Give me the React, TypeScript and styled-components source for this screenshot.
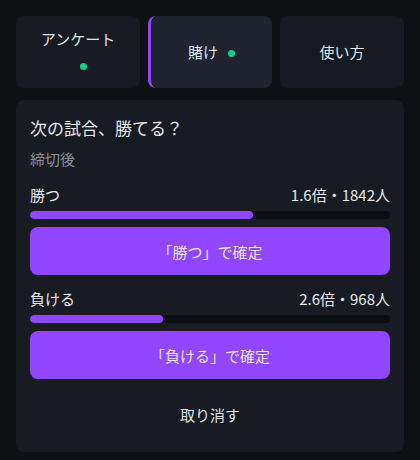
import styled, { createGlobalStyle } from "styled-components";

const GlobalStyle = createGlobalStyle`
    html, body {
        margin: 0;
        padding: 0;
        background: #0f1013;
    }
    body {
        font-family: "Noto Sans CJK JP", "Noto Sans", sans-serif;
        color: #e3e6eb;
    }
    * {
        box-sizing: border-box;
    }
`

type TabType = {
    label: string
    dot?: boolean
    active?: boolean
}

const tabs: TabType[] = [
    {label: "アンケート", dot: true},
    {label: "賭け", dot: true, active: true},
    {label: "使い方"},
]

type OptionType = {
    name: string
    odds: string
    count: string
    percent: number
}

const options: OptionType[] = [
    {name: "勝つ", odds: "1.6倍", count: "1842人", percent: 62},
    {name: "負ける", odds: "2.6倍", count: "968人", percent: 37},
]

export const App = () => {
    return (
        <Page>
            <GlobalStyle/>
            <Tabs>
                {tabs.map(tab => (
                    <Tab key={tab.label} $active={tab.active}>
                        <TabLabel>
                            {tab.label}
                            {tab.dot && <Dot/>}
                        </TabLabel>
                    </Tab>
                ))}
            </Tabs>

            <Card>
                <Title>次の試合、勝てる？</Title>
                <Status>締切後</Status>

                <Options>
                    {options.map(option => (
                        <Option key={option.name}>
                            <OptionHead>
                                <span>{option.name}</span>
                                <span>{option.odds}・{option.count}</span>
                            </OptionHead>
                            <Track>
                                <Fill style={{width: `${option.percent}%`}}/>
                            </Track>
                            <ConfirmButton>「{option.name}」で確定</ConfirmButton>
                        </Option>
                    ))}
                </Options>

                <CancelButton>取り消す</CancelButton>
            </Card>
        </Page>
    );
};

export default App;

const Page = styled.div`
    padding: 16px;
    display: flex;
    flex-direction: column;
    gap: 12px;
`

const Tabs = styled.div`
    display: grid;
    grid-template-columns: repeat(3, 1fr);
    gap: 8px;
`

const Tab = styled.button<{ $active?: boolean }>`
    height: 72px;
    padding: 0 20px;
    display: flex;
    align-items: center;
    justify-content: center;
    text-align: center;
    border: none;
    border-left: ${props => props.$active ? "3px solid #9146ff" : "none"};
    border-radius: 8px;
    background: ${props => props.$active ? "#1f2430" : "#171a20"};
    color: #dfe2e8;
    font-family: inherit;
    font-size: 15px;
    cursor: pointer;
`

const TabLabel = styled.span`
    line-height: 26px;
`

const Dot = styled.span`
    display: inline-block;
    width: 7px;
    height: 7px;
    margin-left: 10px;
    border-radius: 50%;
    background: #0fd08a;
    vertical-align: middle;
`

const Card = styled.div`
    background: #181b22;
    border-radius: 8px;
    padding: 16px 14px 14px;
    display: flex;
    flex-direction: column;
`

const Title = styled.h2`
    margin: 0;
    font-size: 17px;
    font-weight: 400;
    line-height: 24px;
    color: #e6e9ee;
`

const Status = styled.div`
    margin-top: 9px;
    font-size: 15px;
    line-height: 20px;
    color: #8a8f99;
`

const Options = styled.div`
    margin-top: 16px;
    display: flex;
    flex-direction: column;
    gap: 14px;
`

const Option = styled.div`
    display: flex;
    flex-direction: column;
`

const OptionHead = styled.div`
    display: flex;
    justify-content: space-between;
    font-size: 15px;
    line-height: 20px;
    color: #e6e9ee;
`

const Track = styled.div`
    margin-top: 6px;
    height: 8px;
    border-radius: 4px;
    background: #0d0e11;
    overflow: hidden;
`

const Fill = styled.div`
    height: 100%;
    border-radius: 4px;
    background: #9146ff;
`

const ConfirmButton = styled.button`
    margin-top: 8px;
    height: 48px;
    border: none;
    border-radius: 8px;
    background: #9146ff;
    color: #ebe3ff;
    font-family: inherit;
    font-size: 15px;
    cursor: pointer;
`

const CancelButton = styled.button`
    margin-top: 11px;
    height: 48px;
    border: none;
    background: transparent;
    color: #dfe2e8;
    font-family: inherit;
    font-size: 15px;
    cursor: pointer;
`
